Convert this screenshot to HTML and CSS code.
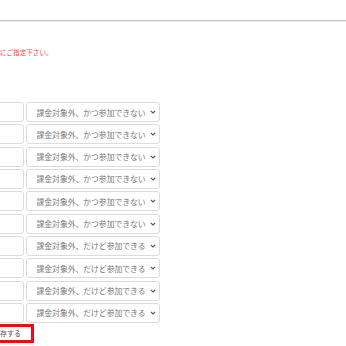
FILE: index.html
```html
<!DOCTYPE html>
<html lang="ja">
<head>
  <meta charset="UTF-8">
  <meta name="viewport" content="width=device-width, initial-scale=1.0">
  <title>参加設定</title>
  <link rel="stylesheet" href="styles.css">
</head>
<body>
  <div class="header"></div>

  <div class="page">
    <p class="notice">にご指定下さい。</p>

    <!-- member rows -->
    <div class="member-list">
      <div class="member-row">
        <input type="text" class="name-input">
        <div class="select-box">
          <select><option>課金対象外、かつ参加できない</option></select>
          <svg class="chevron" width="6" height="4" viewBox="0 0 6 4"><path d="M0.8 0.8 L3 3 L5.2 0.8" fill="none" stroke="#555" stroke-width="1.1"/></svg>
        </div>
      </div>
      <div class="member-row">
        <input type="text" class="name-input">
        <div class="select-box">
          <select><option>課金対象外、かつ参加できない</option></select>
          <svg class="chevron" width="6" height="4" viewBox="0 0 6 4"><path d="M0.8 0.8 L3 3 L5.2 0.8" fill="none" stroke="#555" stroke-width="1.1"/></svg>
        </div>
      </div>
      <div class="member-row">
        <input type="text" class="name-input">
        <div class="select-box">
          <select><option>課金対象外、かつ参加できない</option></select>
          <svg class="chevron" width="6" height="4" viewBox="0 0 6 4"><path d="M0.8 0.8 L3 3 L5.2 0.8" fill="none" stroke="#555" stroke-width="1.1"/></svg>
        </div>
      </div>
      <div class="member-row">
        <input type="text" class="name-input">
        <div class="select-box">
          <select><option>課金対象外、かつ参加できない</option></select>
          <svg class="chevron" width="6" height="4" viewBox="0 0 6 4"><path d="M0.8 0.8 L3 3 L5.2 0.8" fill="none" stroke="#555" stroke-width="1.1"/></svg>
        </div>
      </div>
      <div class="member-row">
        <input type="text" class="name-input">
        <div class="select-box">
          <select><option>課金対象外、かつ参加できない</option></select>
          <svg class="chevron" width="6" height="4" viewBox="0 0 6 4"><path d="M0.8 0.8 L3 3 L5.2 0.8" fill="none" stroke="#555" stroke-width="1.1"/></svg>
        </div>
      </div>
      <div class="member-row">
        <input type="text" class="name-input">
        <div class="select-box">
          <select><option>課金対象外、かつ参加できない</option></select>
          <svg class="chevron" width="6" height="4" viewBox="0 0 6 4"><path d="M0.8 0.8 L3 3 L5.2 0.8" fill="none" stroke="#555" stroke-width="1.1"/></svg>
        </div>
      </div>
      <div class="member-row">
        <input type="text" class="name-input">
        <div class="select-box">
          <select><option>課金対象外、だけど参加できる</option></select>
          <svg class="chevron" width="6" height="4" viewBox="0 0 6 4"><path d="M0.8 0.8 L3 3 L5.2 0.8" fill="none" stroke="#555" stroke-width="1.1"/></svg>
        </div>
      </div>
      <div class="member-row">
        <input type="text" class="name-input">
        <div class="select-box">
          <select><option>課金対象外、だけど参加できる</option></select>
          <svg class="chevron" width="6" height="4" viewBox="0 0 6 4"><path d="M0.8 0.8 L3 3 L5.2 0.8" fill="none" stroke="#555" stroke-width="1.1"/></svg>
        </div>
      </div>
      <div class="member-row">
        <input type="text" class="name-input">
        <div class="select-box">
          <select><option>課金対象外、だけど参加できる</option></select>
          <svg class="chevron" width="6" height="4" viewBox="0 0 6 4"><path d="M0.8 0.8 L3 3 L5.2 0.8" fill="none" stroke="#555" stroke-width="1.1"/></svg>
        </div>
      </div>
      <div class="member-row">
        <input type="text" class="name-input">
        <div class="select-box">
          <select><option>課金対象外、だけど参加できる</option></select>
          <svg class="chevron" width="6" height="4" viewBox="0 0 6 4"><path d="M0.8 0.8 L3 3 L5.2 0.8" fill="none" stroke="#555" stroke-width="1.1"/></svg>
        </div>
      </div>
    </div>

    <button class="save-btn">保存する</button>
  </div>
</body>
</html>
```

FILE: styles.css
```css
body {
  margin: 0;
  background-color: #fff;
  font-family: "Noto Sans CJK JP", "Noto Sans", sans-serif;
  color: #666;
}

.header {
  height: 20px;
  border-bottom: 1px solid #c9c9c9;
  box-shadow: 0 1px 0 #ececec;
}

.page {
  margin-left: -40px;
}

.notice {
  margin: 27px 0 0 40px;
  font-size: 6.6px;
  line-height: 8px;
  color: #ff3a3a;
}

.member-list {
  margin-top: 46px;
  display: flex;
  flex-direction: column;
  gap: 2.33px;
}

.member-row {
  display: flex;
  gap: 2.5px;
  height: 20px;
}

.name-input {
  display: block;
  width: 63.5px;
  height: 100%;
  box-sizing: border-box;
  border: 1px solid #dcdcdc;
  border-radius: 3px;
  padding: 0;
}

.select-box {
  position: relative;
  width: 134px;
  height: 100%;
}

.select-box select {
  display: block;
  appearance: none;
  -webkit-appearance: none;
  width: 100%;
  height: 100%;
  box-sizing: border-box;
  border: 1px solid #dcdcdc;
  border-radius: 3px;
  background: #fff;
  padding: 0 0 0 9.5px;
  font-family: "Noto Sans CJK JP", "Noto Sans", sans-serif;
  font-size: 7.8px;
  color: #7a7a7a;
}

.chevron {
  position: absolute;
  right: 4px;
  top: 8px;
}

.save-btn {
  display: block;
  margin-top: 1px;
  width: 73.5px;
  height: 19px;
  box-sizing: border-box;
  border: 3px solid #e0101e;
  background: #fff;
  padding: 0 0 0 30px;
  text-align: left;
  font-family: "Noto Sans CJK JP", "Noto Sans", sans-serif;
  font-size: 7px;
  color: #555;
}
```
